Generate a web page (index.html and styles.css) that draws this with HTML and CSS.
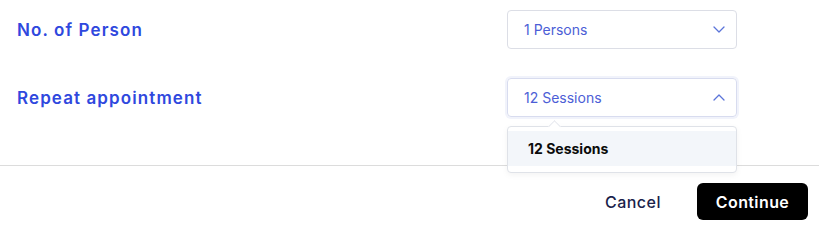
FILE: index.html
```html
<!DOCTYPE html>
<html lang="en">
<head>
    <meta charset="UTF-8">
    <meta name="viewport" content="width=device-width, initial-scale=1.0">
    <title>Booking options</title>
    <link rel="stylesheet" href="styles.css">
</head>
<body>
    <div class="form">
        <div class="form-row">
            <label class="form-label">No. of Person</label>
            <div class="select">
                <span class="select-value">1 Persons</span>
                <svg class="chevron" width="12" height="7" viewBox="0 0 12 7"><path d="M1 1l5 5 5-5" fill="none" stroke="currentColor" stroke-width="1.3" stroke-linecap="round" stroke-linejoin="round"/></svg>
            </div>
        </div>

        <div class="form-row">
            <label class="form-label">Repeat appointment</label>
            <div class="select select-open">
                <span class="select-value">12 Sessions</span>
                <svg class="chevron" width="12" height="7" viewBox="0 0 12 7"><path d="M1 6l5-5 5 5" fill="none" stroke="currentColor" stroke-width="1.3" stroke-linecap="round" stroke-linejoin="round"/></svg>
                <div class="menu">
                    <div class="menu-item">12 Sessions</div>
                </div>
            </div>
        </div>
    </div>

    <div class="footer">
        <button class="btn btn-cancel">Cancel</button>
        <button class="btn btn-continue">Continue</button>
    </div>
</body>
</html>
```

FILE: styles.css
```css
body {
    margin: 0;
    font-family: Inter, "Noto Sans", sans-serif;
    background-color: white;
}
.form {
    padding: 10px 82px 0 17px;
    display: flex;
    flex-direction: column;
    gap: 29px;
}
.form-row {
    display: flex;
    align-items: center;
    justify-content: space-between;
}
.form-label {
    font-size: 17px;
    font-weight: 600;
    color: #2f48de;
    letter-spacing: 1.1px;
}
.select {
    position: relative;
    width: 230px;
    height: 39px;
    box-sizing: border-box;
    border: 1px solid #dcdee6;
    border-radius: 4px;
    padding: 0 11px 0 16px;
    display: flex;
    align-items: center;
    justify-content: space-between;
}
.select-open {
    border-color: #d8dcef;
    box-shadow: 0 0 0 2px #f1f3fb;
}
.select-value {
    font-size: 14px;
    color: #4c5ed6;
}
.chevron {
    color: #5b74d9;
}
.menu {
    position: absolute;
    top: 47px;
    left: -1px;
    right: -1px;
    background: white;
    border: 1px solid #dfe2e8;
    border-radius: 4px;
    box-shadow: 0 2px 6px rgba(0,0,0,0.05);
    padding: 4px 0 6px;
}
.menu::before {
    content: "";
    position: absolute;
    top: -5px;
    left: 42px;
    width: 8px;
    height: 8px;
    background: white;
    border-left: 1px solid #e6e8ee;
    border-top: 1px solid #e6e8ee;
    transform: rotate(45deg);
}
.menu-item {
    position: relative;
    background: #f3f6fa;
    padding: 0 20px;
    height: 35px;
    line-height: 35px;
    font-size: 14px;
    font-weight: 700;
    color: #0b0b0b;
}
.footer {
    margin-top: 48px;
    border-top: 1px solid #dcdcdc;
    padding: 17px 11px 12px 0;
    display: flex;
    justify-content: flex-end;
    gap: 12px;
}
.btn {
    height: 37px;
    border: none;
    border-radius: 6px;
    font-family: Inter, "Noto Sans", sans-serif;
    font-size: 16px;
    cursor: pointer;
}
.btn-cancel {
    background: none;
    color: #1b1f4b;
    font-weight: 500;
    letter-spacing: 0.5px;
    padding: 0 24px;
}
.btn-continue {
    background: black;
    color: white;
    font-weight: 600;
    letter-spacing: 0.4px;
    width: 111px;
}
```
